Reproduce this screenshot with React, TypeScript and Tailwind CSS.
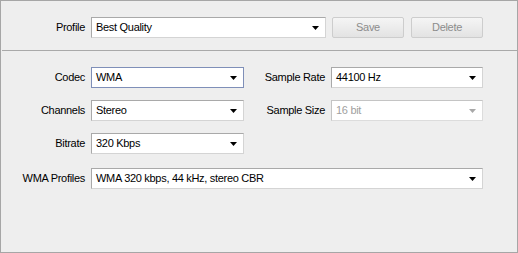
import React from "react";

function Arrow({ disabled }: { disabled?: boolean }) {
  return (
    <svg width="7" height="4" viewBox="0 0 7 4" className="shrink-0">
      <polygon points="0,0 7,0 3.5,4" fill={disabled ? "#a8a8a8" : "#000"} />
    </svg>
  );
}

function Combo({
  value,
  w,
  focused,
  disabled,
}: {
  value: string;
  w: string;
  focused?: boolean;
  disabled?: boolean;
}) {
  const border = focused
    ? "border-[#7f8fb8]"
    : disabled
    ? "border-t-[#c4c4c4] border-l-[#c4c4c4] border-r-[#dcdcdc] border-b-[#dcdcdc]"
    : "border-t-[#a9a9a9] border-l-[#a9a9a9] border-r-[#d4d4d4] border-b-[#d4d4d4]";
  return (
    <div
      className={`${w} h-[21px] flex items-center justify-between bg-white border ${border} pl-[4px] pr-[6px]`}
    >
      <span className={disabled ? "text-[#a0a0a0]" : "text-black"}>{value}</span>
      <Arrow disabled={disabled} />
    </div>
  );
}

function Button({ label }: { label: string }) {
  return (
    <div className="w-[72px] h-[21px] flex items-center justify-center border border-[#cdcdcd] rounded-[2px] bg-gradient-to-b from-[#f5f5f5] to-[#e3e3e3] text-[#8c8c8c]">
      {label}
    </div>
  );
}

function Label({ text, w }: { text: string; w: string }) {
  return <div className={`${w} text-right text-black pr-[6px]`}>{text}</div>;
}

export default function App() {
  return (
    <div
      className="w-[518px] h-[253px] bg-[#eeeeee] border border-[#a6a6a6] text-[11px] tracking-[-0.3px] flex flex-col"
      style={{ fontFamily: '"Liberation Sans", Arial, sans-serif' }}
    >
      <div className="pt-[16px] pb-[12px] flex items-center">
        <Label text="Profile" w="w-[90px]" />
        <Combo value="Best Quality" w="w-[235px]" />
        <div className="ml-[6px]">
          <Button label="Save" />
        </div>
        <div className="ml-[7px]">
          <Button label="Delete" />
        </div>
      </div>
      <div className="ml-[1px] border-t border-[#a9a9a9]" />
      <div className="pt-[16px] flex flex-col">
        <div className="flex items-center h-[21px]">
          <Label text="Codec" w="w-[90px]" />
          <Combo value="WMA" w="w-[153px]" focused />
          <Label text="Sample Rate" w="w-[87px]" />
          <Combo value="44100 Hz" w="w-[152px]" />
        </div>
        <div className="flex items-center h-[21px] mt-[12px]">
          <Label text="Channels" w="w-[90px]" />
          <Combo value="Stereo" w="w-[153px]" />
          <Label text="Sample Size" w="w-[87px]" />
          <Combo value="16 bit" w="w-[152px]" disabled />
        </div>
        <div className="flex items-center h-[21px] mt-[12px]">
          <Label text="Bitrate" w="w-[90px]" />
          <Combo value="320 Kbps" w="w-[153px]" />
        </div>
        <div className="flex items-center h-[21px] mt-[14px]">
          <Label text="WMA Profiles" w="w-[90px]" />
          <Combo value="WMA 320 kbps, 44 kHz, stereo CBR" w="w-[392px]" />
        </div>
      </div>
    </div>
  );
}
